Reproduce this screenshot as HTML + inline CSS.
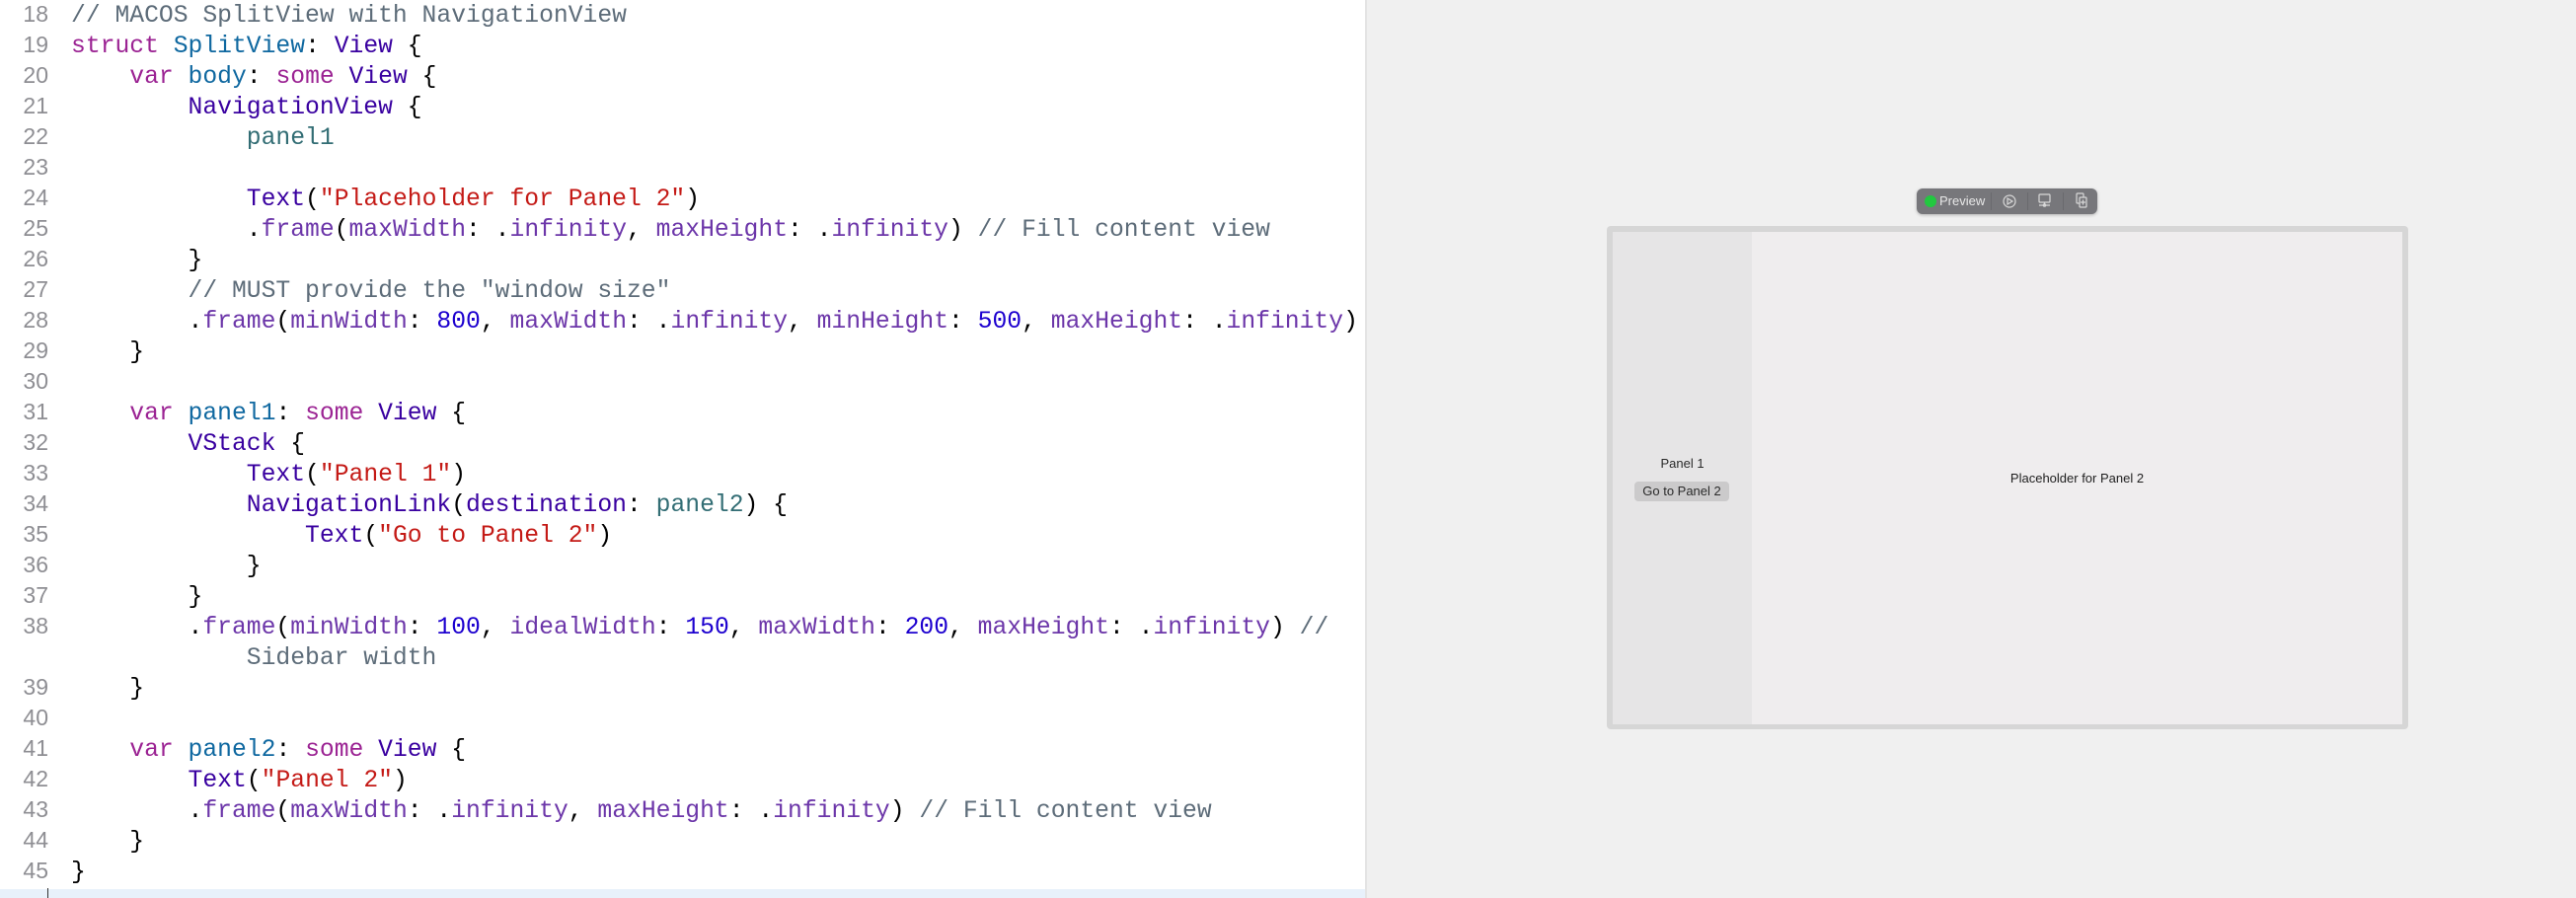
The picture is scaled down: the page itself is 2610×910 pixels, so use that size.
<!DOCTYPE html>
<html><head><meta charset="utf-8"><style>
html,body{margin:0;padding:0;width:2610px;height:910px;overflow:hidden;background:#f0f0f0}
#code{position:absolute;left:0;top:0;width:1383px;height:910px;background:#fff;border-right:2px solid #e4e4e4;overflow:hidden}
.ln{position:absolute;left:0;width:49px;text-align:right;font-family:"Liberation Sans",sans-serif;font-size:23px;color:#8e8e93;line-height:31px;margin-top:-2px}
.cl{position:absolute;left:72px;font-family:"Liberation Mono",monospace;font-size:24.7px;line-height:31px;white-space:pre;color:#000}
.c{color:#5d6c79}.k{color:#9b2393}.d{color:#0f68a0}.t{color:#3900a0}.r{color:#326d74}.f{color:#6c36a9}.n{color:#1c00cf}.s{color:#c41a16}
#cur{position:absolute;left:0;top:901px;width:1383px;height:9px;background:#e8f1fb}
</style></head><body>
<div id="code">
<div id="cur"></div>
<div style="position:absolute;left:48px;top:900px;width:1px;height:10px;background:#333"></div>
<div class="ln" style="top:1px">18</div><div class="cl" style="top:1px"><span class="c">// MACOS SplitView with NavigationView</span></div>
<div class="ln" style="top:32px">19</div><div class="cl" style="top:32px"><span class="k">struct</span> <span class="d">SplitView</span>: <span class="t">View</span> {</div>
<div class="ln" style="top:63px">20</div><div class="cl" style="top:63px">    <span class="k">var</span> <span class="d">body</span>: <span class="k">some</span> <span class="t">View</span> {</div>
<div class="ln" style="top:94px">21</div><div class="cl" style="top:94px">        <span class="t">NavigationView</span> {</div>
<div class="ln" style="top:125px">22</div><div class="cl" style="top:125px">            <span class="r">panel1</span></div>
<div class="ln" style="top:156px">23</div>
<div class="ln" style="top:187px">24</div><div class="cl" style="top:187px">            <span class="t">Text</span>(<span class="s">"Placeholder for Panel 2"</span>)</div>
<div class="ln" style="top:218px">25</div><div class="cl" style="top:218px">            .<span class="f">frame</span>(<span class="f">maxWidth</span>: .<span class="f">infinity</span>, <span class="f">maxHeight</span>: .<span class="f">infinity</span>) <span class="c">// Fill content view</span></div>
<div class="ln" style="top:249px">26</div><div class="cl" style="top:249px">        }</div>
<div class="ln" style="top:280px">27</div><div class="cl" style="top:280px">        <span class="c">// MUST provide the "window size"</span></div>
<div class="ln" style="top:311px">28</div><div class="cl" style="top:311px">        .<span class="f">frame</span>(<span class="f">minWidth</span>: <span class="n">800</span>, <span class="f">maxWidth</span>: .<span class="f">infinity</span>, <span class="f">minHeight</span>: <span class="n">500</span>, <span class="f">maxHeight</span>: .<span class="f">infinity</span>)</div>
<div class="ln" style="top:342px">29</div><div class="cl" style="top:342px">    }</div>
<div class="ln" style="top:373px">30</div>
<div class="ln" style="top:404px">31</div><div class="cl" style="top:404px">    <span class="k">var</span> <span class="d">panel1</span>: <span class="k">some</span> <span class="t">View</span> {</div>
<div class="ln" style="top:435px">32</div><div class="cl" style="top:435px">        <span class="t">VStack</span> {</div>
<div class="ln" style="top:466px">33</div><div class="cl" style="top:466px">            <span class="t">Text</span>(<span class="s">"Panel 1"</span>)</div>
<div class="ln" style="top:497px">34</div><div class="cl" style="top:497px">            <span class="t">NavigationLink</span>(<span class="t">destination</span>: <span class="r">panel2</span>) {</div>
<div class="ln" style="top:528px">35</div><div class="cl" style="top:528px">                <span class="t">Text</span>(<span class="s">"Go to Panel 2"</span>)</div>
<div class="ln" style="top:559px">36</div><div class="cl" style="top:559px">            }</div>
<div class="ln" style="top:590px">37</div><div class="cl" style="top:590px">        }</div>
<div class="ln" style="top:621px">38</div><div class="cl" style="top:621px">        .<span class="f">frame</span>(<span class="f">minWidth</span>: <span class="n">100</span>, <span class="f">idealWidth</span>: <span class="n">150</span>, <span class="f">maxWidth</span>: <span class="n">200</span>, <span class="f">maxHeight</span>: .<span class="f">infinity</span>) <span class="c">//</span></div>
<div class="cl" style="top:652px">            <span class="c">Sidebar width</span></div>
<div class="ln" style="top:683px">39</div><div class="cl" style="top:683px">    }</div>
<div class="ln" style="top:714px">40</div>
<div class="ln" style="top:745px">41</div><div class="cl" style="top:745px">    <span class="k">var</span> <span class="d">panel2</span>: <span class="k">some</span> <span class="t">View</span> {</div>
<div class="ln" style="top:776px">42</div><div class="cl" style="top:776px">        <span class="t">Text</span>(<span class="s">"Panel 2"</span>)</div>
<div class="ln" style="top:807px">43</div><div class="cl" style="top:807px">        .<span class="f">frame</span>(<span class="f">maxWidth</span>: .<span class="f">infinity</span>, <span class="f">maxHeight</span>: .<span class="f">infinity</span>) <span class="c">// Fill content view</span></div>
<div class="ln" style="top:838px">44</div><div class="cl" style="top:838px">    }</div>
<div class="ln" style="top:869px">45</div><div class="cl" style="top:869px">}</div>
</div>

<!-- toolbar -->
<div style="position:absolute;left:1942px;top:191px;width:183px;height:26px;background:#77777b;border-radius:6px;box-shadow:0 1px 3px rgba(0,0,0,.25);font-family:'Liberation Sans',sans-serif">
  <div style="position:absolute;left:8px;top:7px;width:12px;height:12px;border-radius:50%;background:#22c840"></div>
  <div style="position:absolute;left:23px;top:5px;font-size:13px;color:#e8e8e8">Preview</div>
  <div style="position:absolute;left:75px;top:4px;width:1px;height:18px;background:#6a6a6e"></div>
  <div style="position:absolute;left:112px;top:4px;width:1px;height:18px;background:#6a6a6e"></div>
  <div style="position:absolute;left:148px;top:4px;width:1px;height:18px;background:#6a6a6e"></div>
  <svg style="position:absolute;left:0;top:0" width="183" height="26" fill="none" stroke="#d8d8d8" stroke-width="1.2">
    <circle cx="94" cy="13" r="6"/><path d="M92 10 L97 13 L92 16 Z"/>
    <rect x="124" y="6" width="11" height="8" rx="1"/><path d="M124 17 H135 M129.5 14 V17"/><circle cx="129.5" cy="17" r="1.2"/>
    <rect x="162" y="5" width="7" height="10" rx="1"/><rect x="165" y="9" width="7" height="10" rx="1" fill="#77777b"/><path d="M168.5 11.5 V16.5 M166 14 H171"/>
  </svg>
</div>

<!-- window -->
<div style="position:absolute;left:1628px;top:229px;width:812px;height:510px;background:#d6d6d6;border-radius:4px"></div>
<div style="position:absolute;left:1634px;top:235px;width:800px;height:499px;background:#efedee"></div>
<div style="position:absolute;left:1634px;top:235px;width:141px;height:499px;background:#e6e5e6"></div>
<div style="position:absolute;left:1634px;top:462px;width:141px;text-align:center;font-family:'Liberation Sans',sans-serif;font-size:13px;color:#2a2a2a">Panel 1</div>
<div style="position:absolute;left:1656px;top:488px;width:96px;height:20px;background:#cbcacb;border-radius:4px;text-align:center;font-family:'Liberation Sans',sans-serif;font-size:13px;line-height:20px;color:#2a2a2a">Go to Panel 2</div>
<div style="position:absolute;left:1775px;top:477px;width:659px;text-align:center;font-family:'Liberation Sans',sans-serif;font-size:13px;color:#1e1e1e">Placeholder for Panel 2</div>
</body></html>
